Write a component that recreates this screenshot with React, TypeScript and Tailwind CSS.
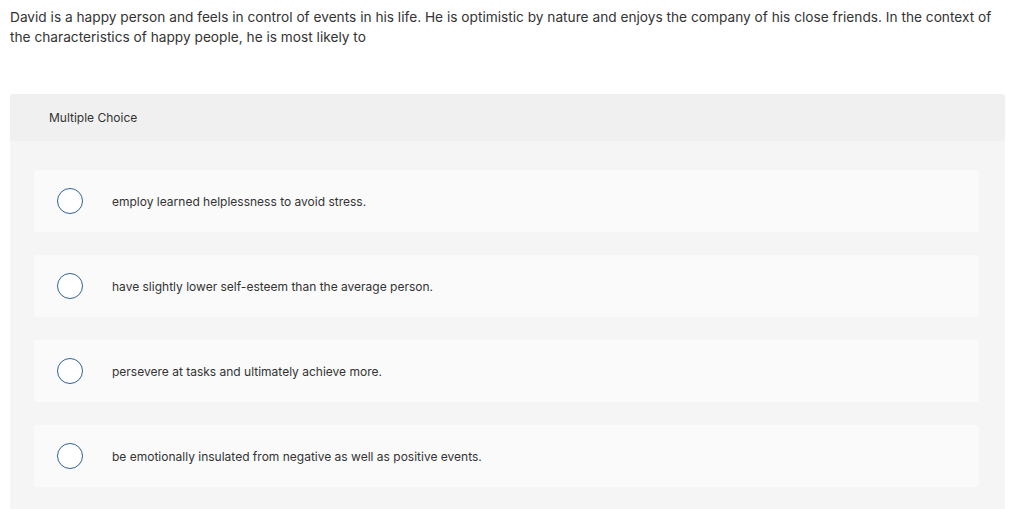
const choices = [
  'employ learned helplessness to avoid stress.',
  'have slightly lower self-esteem than the average person.',
  'persevere at tasks and ultimately achieve more.',
  'be emotionally insulated from negative as well as positive events.',
];

const App = () => {
  return (
    <div className="min-h-screen bg-white font-['Inter',sans-serif] text-[#333]">
      <div className="pl-[10px] pr-[20px] pt-[7px] text-[13.7px] leading-[20px]">
        David is a happy person and feels in control of events in his life. He is optimistic by nature and enjoys
        the company of his close friends. In the context of the characteristics of happy people, he is most likely to
      </div>

      <div className="mx-[10px] mt-[47px] w-[995px] rounded-t-[3px] bg-[#f5f5f5] pb-[22px]">
        <div className="flex h-[47px] items-center rounded-t-[3px] bg-[#f0f0f0] pl-[39px] text-[12px]">
          Multiple Choice
        </div>
        <div className="flex flex-col gap-[23px] px-[24px] pt-[29px]">
          {choices.map((c) => (
            <label
              key={c}
              className="flex h-[62px] w-[945px] cursor-pointer items-center rounded-[3px] bg-[#fafafa] pl-[23px]"
            >
              <span className="h-[26px] w-[26px] shrink-0 rounded-full border border-[#2f6297] bg-white" />
              <span className="ml-[29px] pt-px text-[12px]">{c}</span>
            </label>
          ))}
        </div>
      </div>
    </div>
  );
};

export default App;
